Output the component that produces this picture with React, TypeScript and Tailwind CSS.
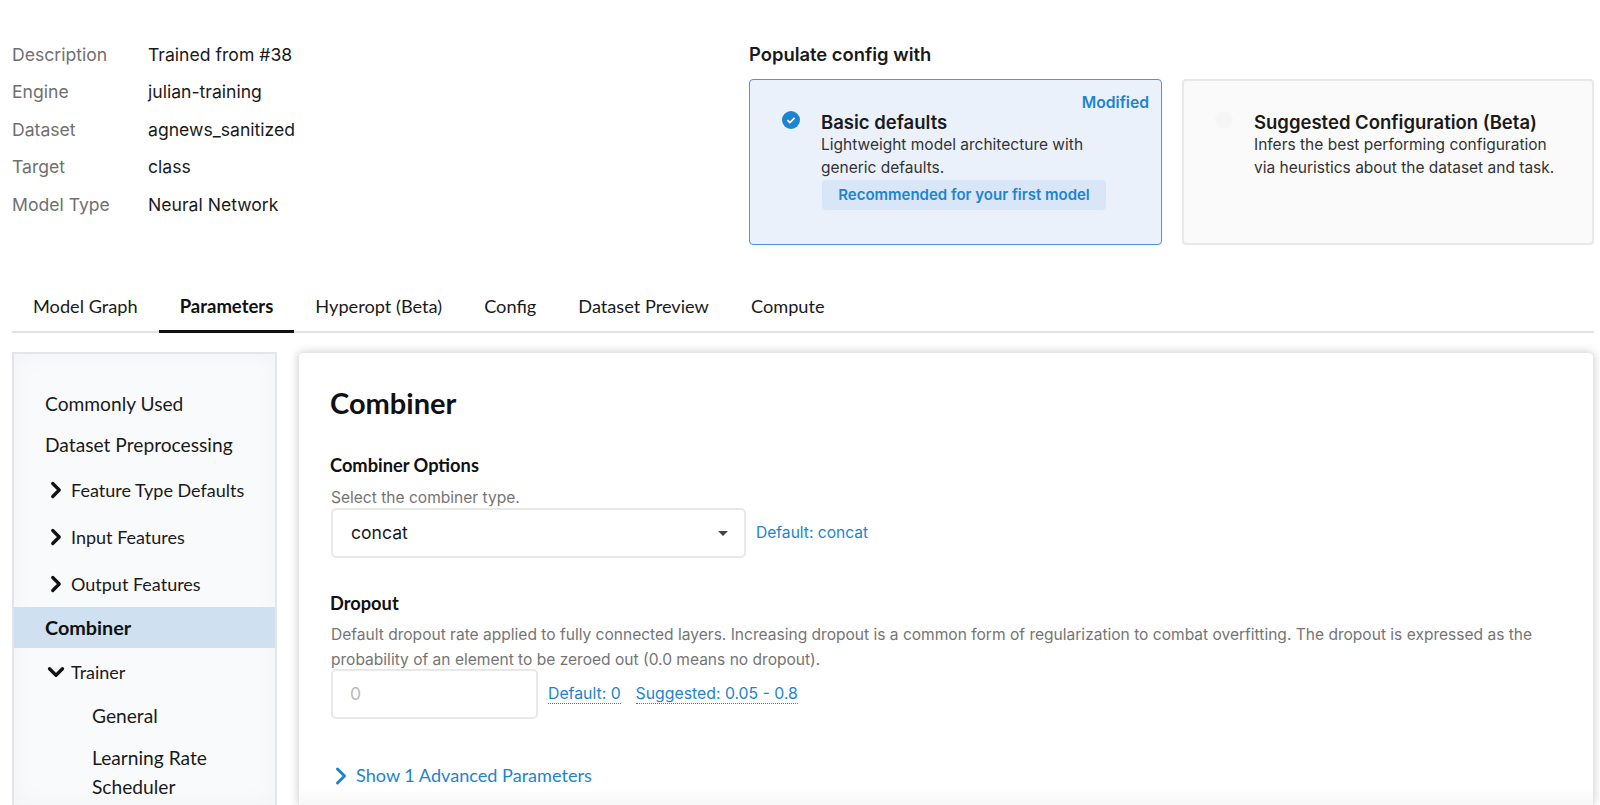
import { ChevronDown, ChevronRight } from 'lucide-react'

const info = [
  ['Description', 'Trained from #38'],
  ['Engine', 'julian-training'],
  ['Dataset', 'agnews_sanitized'],
  ['Target', 'class'],
  ['Model Type', 'Neural Network'],
]

const tabs = ['Model Graph', 'Parameters', 'Hyperopt (Beta)', 'Config', 'Dataset Preview', 'Compute']

function CheckDot() {
  return (
    <svg viewBox="0 0 18 18" className="w-[18px] h-[18px]">
      <circle cx="9" cy="9" r="9" fill="#1d84d1" />
      <path d="M5.4 9.2l2.5 2.4 4.7-4.7" fill="none" stroke="#fff" strokeWidth="1.7" />
    </svg>
  )
}

function SideItem({ label, open }: { label: string; open?: boolean }) {
  const Icon = open ? ChevronDown : ChevronRight
  return (
    <div className="flex items-center h-[47px] pl-[29px] text-[18px]">
      <Icon className="w-[26px] h-[26px] text-[#111] mr-[2px]" strokeWidth={3} />
      <span>{label}</span>
    </div>
  )
}

export default function App() {
  return (
    <div className="h-[805px] overflow-hidden bg-white pl-[12px] pr-[6px] font-['Inter',sans-serif] text-[#1a1a1a]">
      {/* Top summary */}
      <div className="flex h-[285px] pt-[36px]">
        <div className="w-[737px] text-[17.6px]">
          {info.map(([k, v]) => (
            <div key={k} className="flex items-center h-[37.6px]">
              <span className="w-[136px] text-[#707070]">{k}</span>
              <span>{v}</span>
            </div>
          ))}
        </div>
        <div className="flex-1">
          <div className="text-[18.4px] font-semibold h-[43px] leading-[36px]">Populate config with</div>
          <div className="flex gap-[20px]">
            <div className="relative w-[413px] h-[166px] rounded-[4px] border border-[#4a97dc] bg-[#eaf1fb] pl-[71px] pt-[23px]">
              <span className="absolute right-[12px] top-[11px] text-[15.7px] font-semibold text-[#1d84d1]">Modified</span>
              <div className="absolute left-[32px] top-[31px]"><CheckDot /></div>
              <div className="text-[18.5px] font-semibold leading-[24px] mt-[7px]">Basic defaults</div>
              <div className="text-[15.5px] leading-[22.5px] text-[#333]">
                Lightweight model architecture with<br />generic defaults.
              </div>
              <div className="w-[284px] h-[30px] mt-[1px] ml-[1px] rounded-[4px] bg-[#d8e6f7] flex items-center justify-center text-[15px] font-semibold text-[#1d84d1]">
                Recommended for your first model
              </div>
            </div>
            <div className="relative flex-1 h-[166px] rounded-[4px] border-2 border-[#e8e8e8] bg-[#fafafa] pl-[70px] pt-[22px]">
              <div className="absolute left-[31px] top-[30px] w-[18px] h-[18px] rounded-full bg-[#f6f6f6]" />
              <div className="text-[18.5px] font-semibold leading-[24px] mt-[7px]">Suggested Configuration (Beta)</div>
              <div className="text-[15.5px] leading-[22.5px] text-[#333]">
                Infers the best performing configuration<br />via heuristics about the dataset and task.
              </div>
            </div>
          </div>
        </div>
      </div>

      {/* Tabs */}
      <div className="flex h-[48px] border-b-2 border-[#e2e2e2] font-['Lato',sans-serif] text-[18.2px]">
        {tabs.map((t, i) => (
          <div
            key={t}
            className={
              i === 1
                ? 'px-[21px] flex items-center font-bold text-[18.5px] border-b-[3px] border-[#111] -mb-[2px] text-[#111] pb-[1px]'
                : 'px-[21px] flex items-center -mb-[2px] pb-[5px]'
            }
          >
            {t}
          </div>
        ))}
      </div>

      {/* Body */}
      <div className="flex gap-[21px] pt-[19px] font-['Lato',sans-serif]">
        <div className="w-[265px] h-[453px] shrink-0 border-2 border-b-0 border-[#e3e5e8] bg-[#f9fafc] shadow-[inset_0_0_24px_rgba(0,0,0,0.03)] pt-[29px] text-[19.2px] leading-[22px] text-[#1a1a1a]">
          <div className="flex items-center h-[41px] pl-[31px]">Commonly Used</div>
          <div className="flex items-center h-[42px] pl-[31px]">Dataset Preprocessing</div>
          <SideItem label="Feature Type Defaults" />
          <SideItem label="Input Features" />
          <SideItem label="Output Features" />
          <div className="flex items-center h-[41px] pl-[31px] pb-[2px] text-[19.8px] font-bold bg-[#cfe0f1] text-[#111]">Combiner</div>
          <SideItem label="Trainer" open />
          <div className="flex items-center h-[41px] pl-[78px]">General</div>
          <div className="pl-[78px] pt-[8px] leading-[28.5px]">Learning Rate<br />Scheduler</div>
        </div>

        <div className="relative flex-1 h-[453px] rounded-t-[5px] bg-white border border-b-0 border-[#e6e6e6] shadow-[0_0_10px_rgba(0,0,0,0.2)] pl-[32px] pt-[31px]">
          <h1 className="-ml-[1px] text-[29px] font-bold leading-[38px] text-[#111]">Combiner</h1>
          <div className="-ml-[1px] mt-[31px] text-[18.25px] font-bold leading-[24px] text-[#111]">Combiner Options</div>
          <div className="mt-[11px] text-[15.55px] leading-[20px] text-[#757575] font-['Inter',sans-serif]">Select the combiner type.</div>
          <div className="flex items-center">
            <div className="flex items-center justify-between w-[415px] h-[50px] rounded-[5px] border-2 border-[#e8e8e8] pl-[18px] pr-[16px] text-[17.6px] font-['Inter',sans-serif]">
              <span>concat</span>
              <span className="w-0 h-0 border-x-[5px] border-x-transparent border-t-[5px] border-t-[#444]" />
            </div>
            <span className="ml-[10px] text-[15.6px] text-[#1d84d1] font-['Inter',sans-serif]">Default: concat</span>
          </div>

          <div className="-ml-[1px] mt-[33px] text-[18.25px] font-bold leading-[24px] text-[#111]">Dropout</div>
          <div className="mt-[7px] w-[1220px] text-[15.55px] leading-[25px] text-[#757575] font-['Inter',sans-serif]">
            Default dropout rate applied to fully connected layers. Increasing dropout is a common form of regularization to combat overfitting. The dropout is expressed as the probability of an element to be zeroed out (0.0 means no dropout).
          </div>
          <div className="flex items-center -mt-[3px] font-['Inter',sans-serif]">
            <div className="flex items-center w-[207px] h-[50px] rounded-[5px] border-2 border-[#e8e8e8] pl-[17px] text-[17.6px] text-[#bbb]">0</div>
            <span className="ml-[10px] text-[15.8px] text-[#1d84d1] border-b border-dotted border-[#1d84d1] leading-[18px]">Default: 0</span>
            <span className="ml-[15px] text-[15.8px] text-[#1d84d1] border-b border-dotted border-[#1d84d1] leading-[18px]">Suggested: 0.05 - 0.8</span>
          </div>

          <div className="flex items-center mt-[43px] text-[#1d84d1] text-[18.1px]">
            <ChevronRight className="w-[28px] h-[28px] -ml-[4px] mr-[1px]" strokeWidth={2.6} />
            <span>Show 1 Advanced Parameters</span>
          </div>

          {/* fade at the cut-off edge */}
          <div className="absolute left-0 right-0 bottom-0 h-[18px] bg-gradient-to-b from-transparent to-[#f7f7f7]" />
        </div>
      </div>
    </div>
  )
}
